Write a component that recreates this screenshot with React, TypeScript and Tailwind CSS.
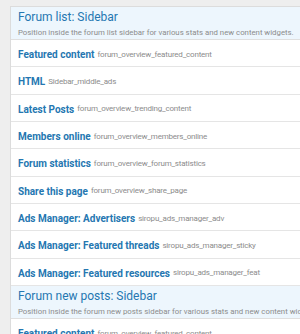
import React from "react";

type Row = { title: string; id: string };

const groups: { title: string; desc: string; rows: Row[] }[] = [
  {
    title: "Forum list: Sidebar",
    desc: "Position inside the forum list sidebar for various stats and new content widgets.",
    rows: [
      { title: "Featured content", id: "forum_overview_featured_content" },
      { title: "HTML", id: "Sidebar_middle_ads" },
      { title: "Latest Posts", id: "forum_overview_trending_content" },
      { title: "Members online", id: "forum_overview_members_online" },
      { title: "Forum statistics", id: "forum_overview_forum_statistics" },
      { title: "Share this page", id: "forum_overview_share_page" },
      { title: "Ads Manager: Advertisers", id: "siropu_ads_manager_adv" },
      { title: "Ads Manager: Featured threads", id: "siropu_ads_manager_sticky" },
      { title: "Ads Manager: Featured resources", id: "siropu_ads_manager_feat" },
    ],
  },
  {
    title: "Forum new posts: Sidebar",
    desc: "Position inside the forum new posts sidebar for various stats and new content widgets.",
    rows: [{ title: "Featured content", id: "forum_overview_featured_content" }],
  },
];

export default function App() {
  return (
    <div
      className="h-[334px] w-[300px] overflow-hidden bg-[#eeeeee] pl-[10px] pt-[6px]"
      style={{ fontFamily: 'Roboto, "Open Sans", sans-serif' }}
    >
      <div className="w-[300px] border-l border-t border-[#dcdcdc] bg-white">
        {groups.map((g) => (
          <div key={g.title}>
            <div className="flex h-[33px] flex-col border-b border-[#dfdfdf] bg-[#edf6fd] px-[7px] pt-[2px]">
              <div className="whitespace-nowrap text-[12px] leading-[16px] text-[#2577b1]">{g.title}</div>
              <div className="mt-[1px] whitespace-nowrap text-[7.8px] leading-[13px] text-[#8c8c8c]">{g.desc}</div>
            </div>
            {g.rows.map((r) => (
              <div
                key={r.title + r.id}
                className="flex h-[27.33px] items-center whitespace-nowrap border-b border-[#e5e5e5] px-[7px] pt-[3px]"
              >
                <span className="text-[10px] font-bold text-[#2577b1]">{r.title}</span>
                <span className="ml-[3px] text-[8px] tracking-[-0.2px] text-[#8c8c8c]">{r.id}</span>
              </div>
            ))}
          </div>
        ))}
      </div>
    </div>
  );
}
